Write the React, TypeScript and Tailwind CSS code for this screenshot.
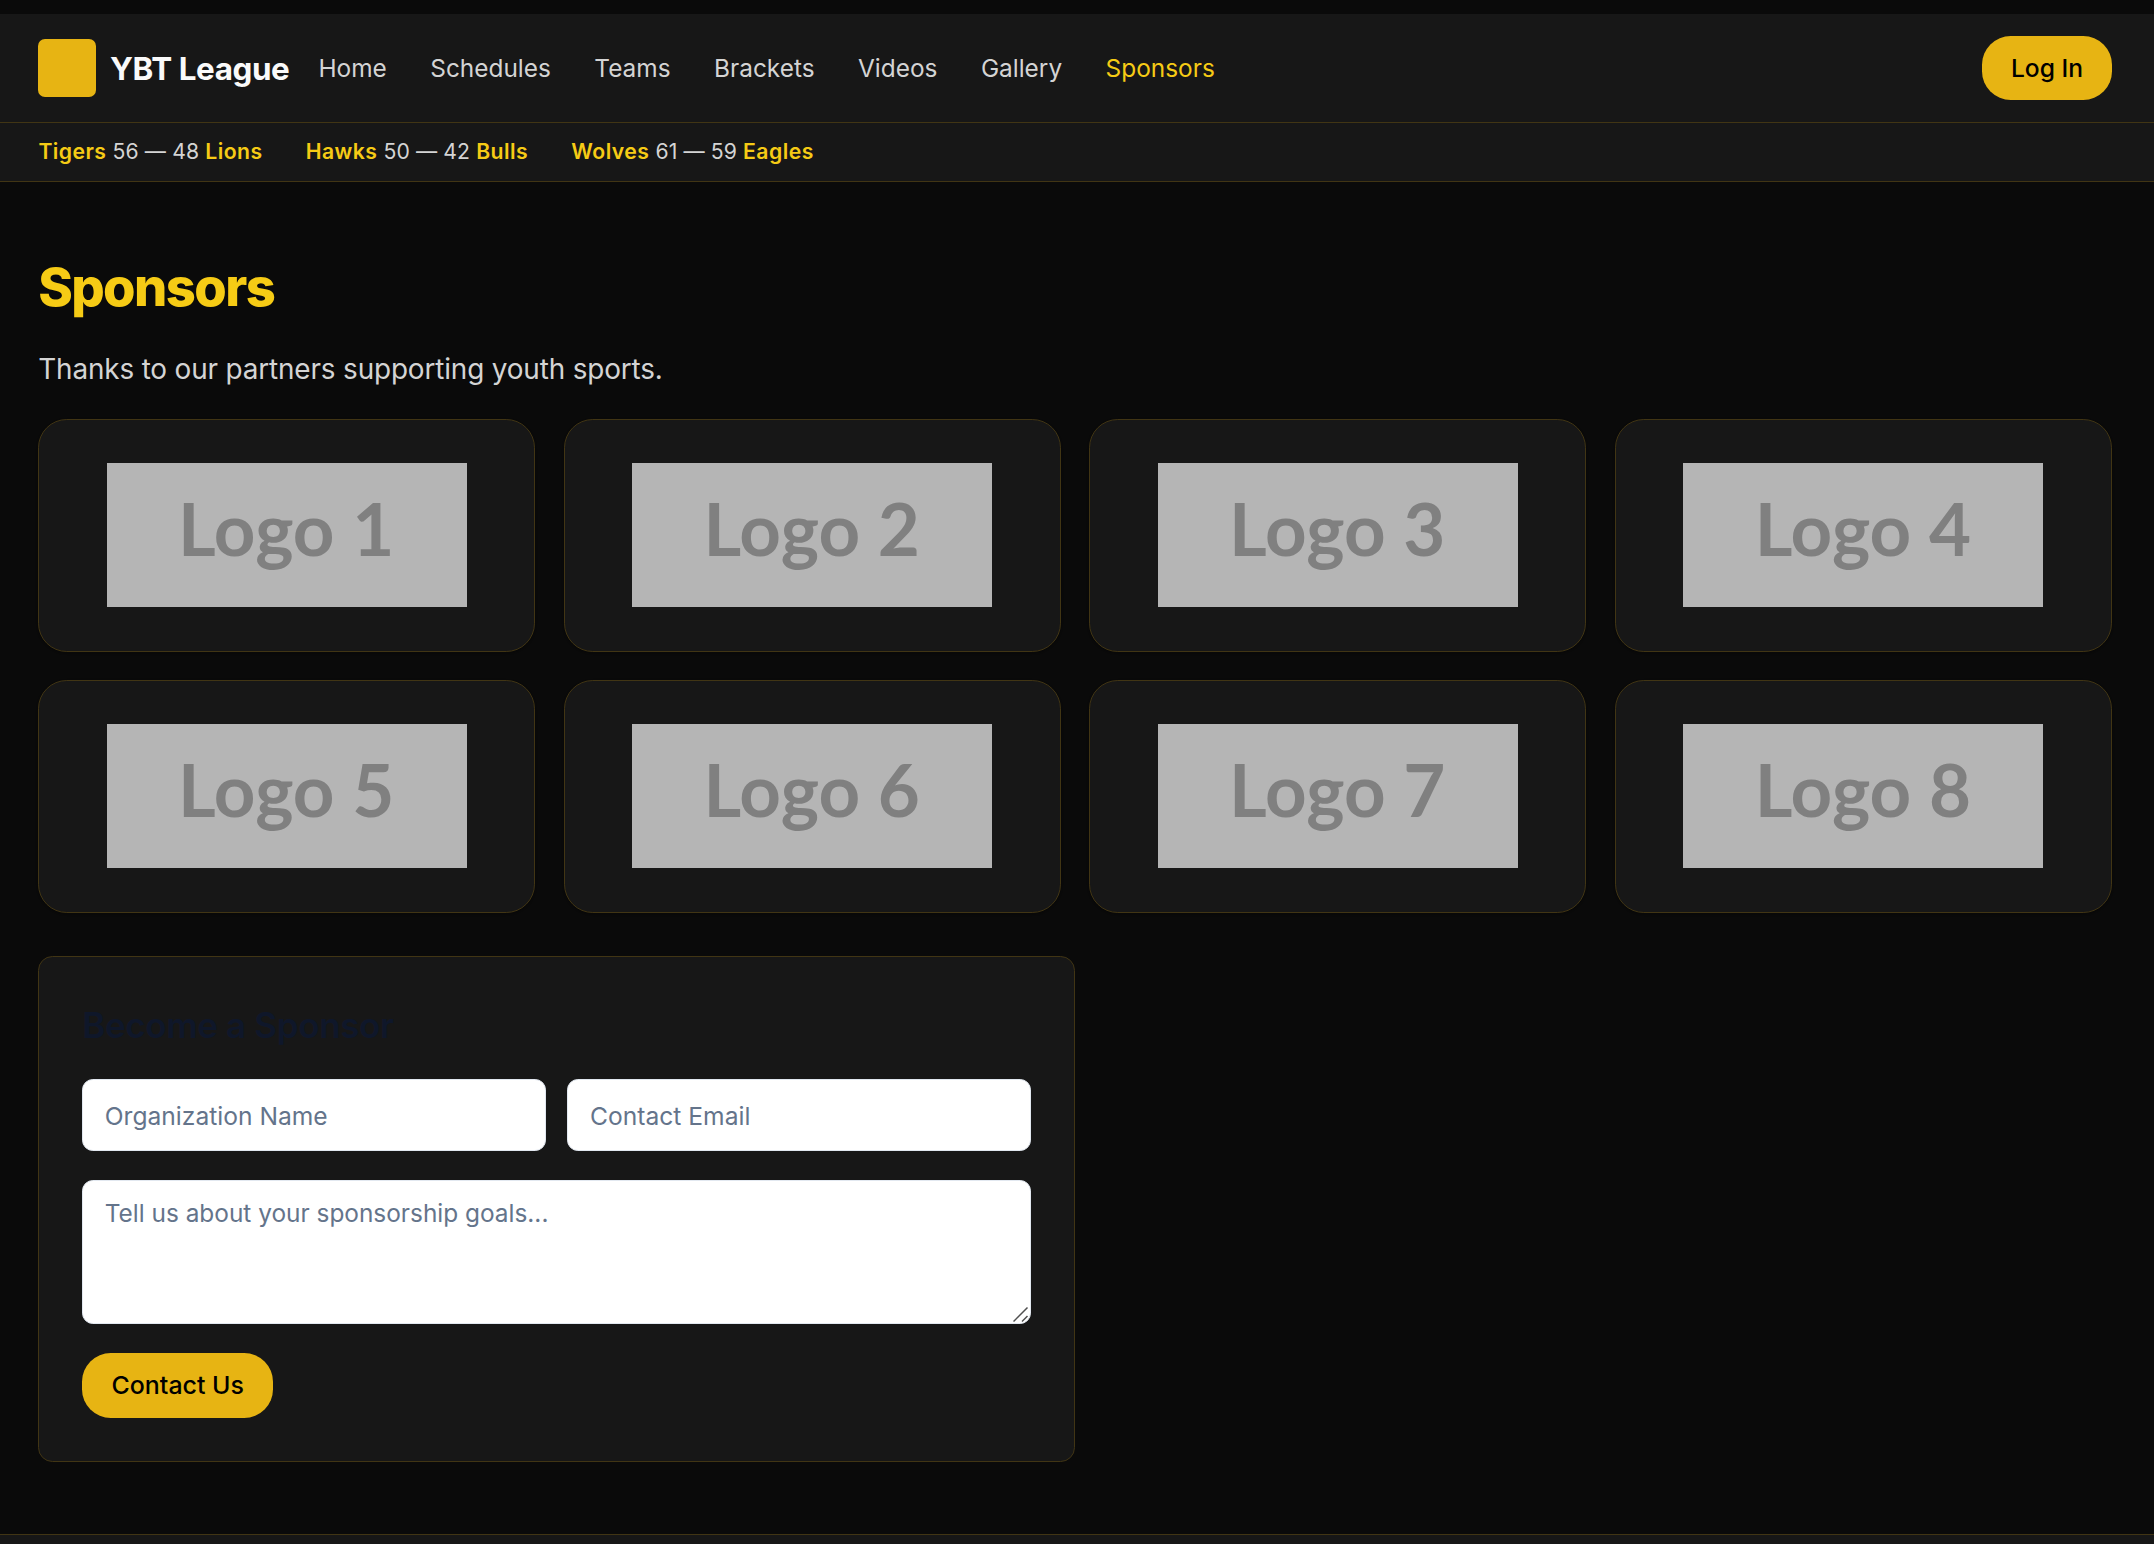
const navItems = ["Home", "Schedules", "Teams", "Brackets", "Videos", "Gallery", "Sponsors"];

const scores = [
  { home: "Tigers", away: "Lions", result: "56 — 48" },
  { home: "Hawks", away: "Bulls", result: "50 — 42" },
  { home: "Wolves", away: "Eagles", result: "61 — 59" },
];

const logos = [1, 2, 3, 4, 5, 6, 7, 8];

function Header() {
  return (
    <header className="bg-[#171717]">
      <div className="flex h-[109px] items-center border-b border-[#413514] pr-[42px] pl-[38px]">
        <div className="size-[58px] shrink-0 rounded-[7px] bg-[#e7b413]" />
        <span className="ml-[14px] w-[180px] pt-[3px] text-[31.4px] leading-none font-bold tracking-[-0.4px] whitespace-nowrap text-[#fafafa]">
          YBT League
        </span>
        <nav className="ml-[28.4px] flex gap-[43.5px] pt-px text-[24.4px] text-[#d4d4d4]">
          {navItems.map((item) => (
            <a key={item} className={item === "Sponsors" ? "text-[#f6cb15]" : undefined}>
              {item}
            </a>
          ))}
        </nav>
        <button className="ml-auto flex h-[64px] w-[130px] items-center justify-center rounded-[28.8px] bg-[#e7b413] text-[24.6px] font-medium text-black">
          Log In
        </button>
      </div>
      <div className="flex h-[59px] items-center gap-[43.2px] border-b border-[#413514] pl-[38.4px] text-[21.2px] tracking-[0.1px] text-[#d4d4d4]">
        {scores.map((s) => (
          <div key={s.home} className="whitespace-nowrap">
            <span className="font-semibold tracking-[0.45px] text-[#f6cb15]">{s.home}</span> {s.result}{" "}
            <span className="font-semibold tracking-[0.45px] text-[#f6cb15]">{s.away}</span>
          </div>
        ))}
      </div>
    </header>
  );
}

function LogoCard({ index }: { index: number }) {
  return (
    <div className="flex h-[233px] items-center justify-center rounded-[28.8px] border border-[#413514] bg-[#171717] pb-[1.4px] shadow-sm">
      <div className="flex h-[144px] w-[360px] items-center justify-center bg-[#b5b5b5] pr-px pb-[14px] font-[Lato] text-[72.6px] leading-none font-bold text-[#808080]">
        Logo {index}
      </div>
    </div>
  );
}

function SponsorForm() {
  return (
    <form className="mt-[43px] h-[506px] w-[1037px] rounded-[14.4px] border border-[#413514] bg-[#171717] px-[43px] pt-[43px]">
      <h2 className="mt-[5px] h-[74px] text-[34.9px] leading-[40px] font-semibold tracking-[-0.3px] text-[#0f172a]">
        Become a Sponsor
      </h2>
      <div className="grid grid-cols-2 gap-[21.6px]">
        <input
          placeholder="Organization Name"
          className="h-[72px] min-w-0 rounded-[10.8px] border border-[#e2e8f0] bg-white px-[21.6px] pt-[2px] text-[24.6px] placeholder:text-[#64748b]"
        />
        <input
          placeholder="Contact Email"
          className="h-[72px] min-w-0 rounded-[10.8px] border border-[#e2e8f0] bg-white px-[21.6px] pt-[2px] text-[24.6px] placeholder:text-[#64748b]"
        />
      </div>
      <div className="relative mt-[29px]">
        <textarea
          placeholder="Tell us about your sponsorship goals..."
          className="block h-[144px] w-full resize-none rounded-[10.8px] border border-[#e2e8f0] bg-white px-[21.6px] py-[14.4px] text-[24.4px] leading-[36px] placeholder:text-[#64748b]"
        />
        <svg className="absolute right-[2px] bottom-[2px] size-4" viewBox="0 0 16 16" fill="none" stroke="#505050" strokeWidth="1.5">
          <path d="M0.5 15.5 14.5 1.5M9 15.5 14.5 10" />
        </svg>
      </div>
      <button className="mt-[29px] flex h-[65px] w-[191px] items-center justify-center rounded-[28.8px] bg-[#e7b413] text-[24.9px] font-medium text-black">
        Contact Us
      </button>
    </form>
  );
}

export default function App() {
  return (
    <div className="h-[1544px] overflow-hidden bg-[#0a0a0a] pt-[14px] font-[Inter,sans-serif]">
      <Header />
      <main className="h-[1352px] w-[2111.8px] pt-[73px] pl-[38.2px]">
        <h1 className="h-[65px] text-[52.5px] leading-[65px] font-extrabold tracking-[-1.6px] text-[#f6cb15]">
          Sponsors
        </h1>
        <p className="mt-[26px] h-[46px] text-[27.9px] leading-[46px] tracking-[-0.15px] text-[#d4d4d4]">
          Thanks to our partners supporting youth sports.
        </p>
        <div className="mt-[27px] grid grid-cols-4 gap-x-[28.8px] gap-y-[28px]">
          {logos.map((n) => (
            <LogoCard key={n} index={n} />
          ))}
        </div>
        <SponsorForm />
      </main>
      <footer className="h-[10px] border-t border-[#413514] bg-[#171717]" />
    </div>
  );
}
